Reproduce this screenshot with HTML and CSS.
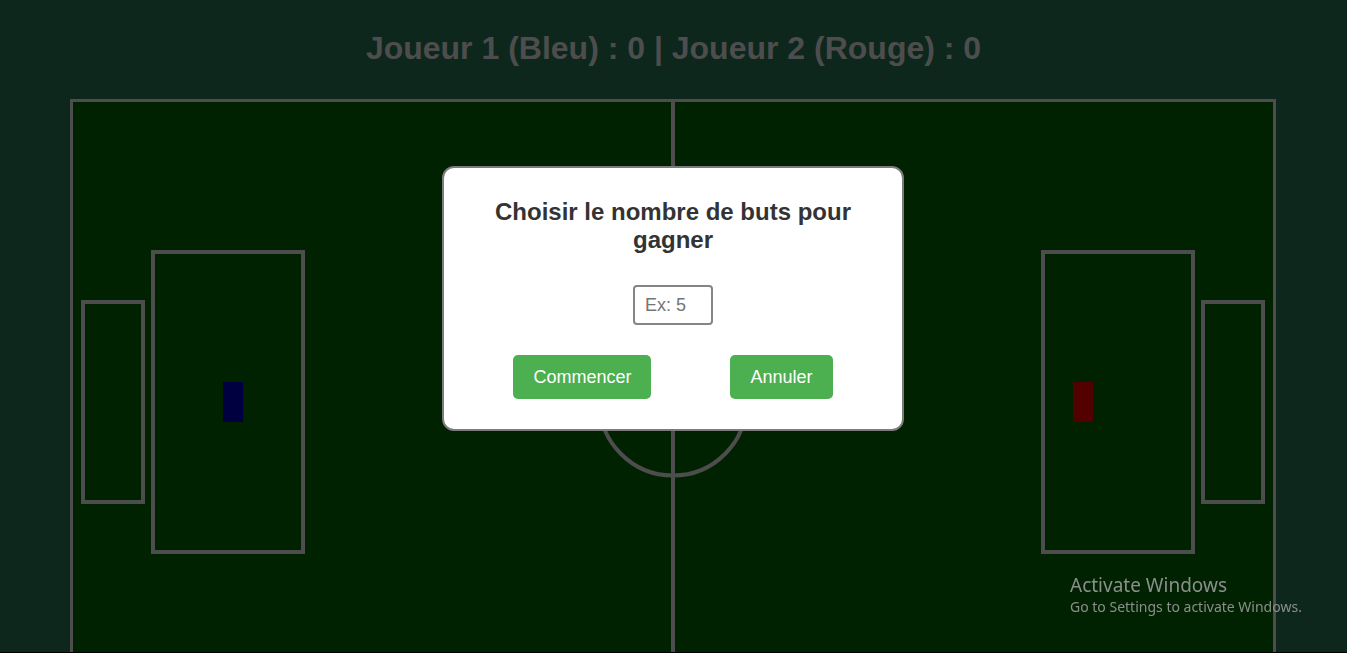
FILE: index.html
```html
<!DOCTYPE html>
<html lang="fr">
<head>
<meta charset="utf-8">
<title>Football</title>
<link rel="stylesheet" href="styles.css">
</head>
<body>
<h1 class="score">Joueur 1 (Bleu) : 0 | Joueur 2 (Rouge) : 0</h1>
<div class="field">
  <svg class="pitch" width="1200" height="600" viewBox="0 0 1200 600" xmlns="http://www.w3.org/2000/svg">
    <rect x="0" y="0" width="1200" height="600" fill="#002200"/>
    <line x1="600" y1="0" x2="600" y2="600" stroke="#4d4d4d" stroke-width="4"/>
    <circle cx="600" cy="300" r="73.5" fill="none" stroke="#4d4d4d" stroke-width="4"/>
    <rect x="10" y="200" width="60" height="200" fill="none" stroke="#4d4d4d" stroke-width="4"/>
    <rect x="80" y="150" width="150" height="300" fill="none" stroke="#4d4d4d" stroke-width="4"/>
    <rect x="1130" y="200" width="60" height="200" fill="none" stroke="#4d4d4d" stroke-width="4"/>
    <rect x="970" y="150" width="150" height="300" fill="none" stroke="#4d4d4d" stroke-width="4"/>
    <rect x="150" y="280" width="20" height="40" fill="#000040"/>
    <rect x="1000" y="280" width="20" height="40" fill="#520000"/>
  </svg>
</div>
<div class="modal">
  <h2 class="modal-title">Choisir le nombre de buts pour gagner</h2>
  <input class="goal-input" type="text" placeholder="Ex: 5">
  <div class="actions">
    <button class="btn">Commencer</button>
    <button class="btn">Annuler</button>
  </div>
</div>
<div class="watermark">
  <div class="wm-title">Activate Windows</div>
  <div class="wm-sub">Go to Settings to activate Windows.</div>
</div>
<div class="bottom-edge"></div>
</body>
</html>
```

FILE: styles.css
```css
html, body {
  margin: 0;
  padding: 0;
  overflow: hidden;
  height: 100%;
}
body {
  background: #0e271c;
  font-family: "Liberation Sans", Arial, sans-serif;
}
.score {
  margin: 0;
  padding-top: 30px;
  line-height: 37px;
  font-size: 32px;
  font-weight: bold;
  text-align: center;
  color: #4d4d4d;
}
.field {
  width: 1200px;
  height: 600px;
  margin: 32px 0 0 70px;
  border: 3px solid #4d4d4d;
}
.pitch {
  display: block;
}
.modal {
  position: fixed;
  top: 166px;
  left: 442px;
  width: 398px;
  padding: 30px 30px 30px;
  background: #ffffff;
  border: 2px solid #7c7c7c;
  border-radius: 12px;
  display: flex;
  flex-direction: column;
  align-items: center;
}
.modal-title {
  margin: 0;
  font-size: 24px;
  line-height: 28px;
  font-weight: bold;
  color: #333333;
  text-align: center;
}
.goal-input {
  margin-top: 31px;
  width: 80px;
  height: 40px;
  box-sizing: border-box;
  border: 2px solid #858585;
  border-radius: 4px;
  padding: 0 10px;
  font-family: "Liberation Sans", Arial, sans-serif;
  font-size: 18px;
  color: #333;
}
.goal-input::placeholder {
  color: #757575;
}
.actions {
  margin-top: 30px;
  display: flex;
  gap: 79px;
}
.btn {
  height: 44px;
  padding: 0 20px;
  border: none;
  border-radius: 5px;
  background: #4caf50;
  color: #ffffff;
  font-family: "Liberation Sans", Arial, sans-serif;
  font-size: 18px;
}
.watermark {
  position: fixed;
  left: 1070px;
  top: 573px;
  color: #8a8f8b;
  font-family: "Noto Sans", "Open Sans", sans-serif;
}
.wm-title {
  font-size: 19px;
  line-height: 24px;
}
.wm-sub {
  font-size: 14px;
  line-height: 20px;
}
.bottom-edge {
  position: fixed;
  left: 0;
  right: 0;
  bottom: 0;
  height: 1px;
  background: #000000;
}
```
